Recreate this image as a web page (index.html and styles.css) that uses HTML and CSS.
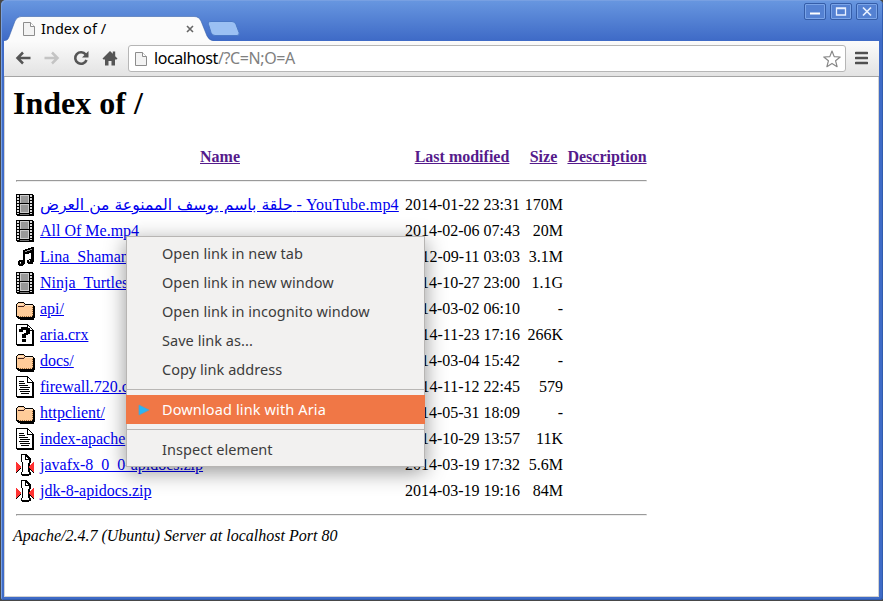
FILE: index.html
```
<!DOCTYPE html>
<html lang="en">
<head>
<meta charset="utf-8">
<title>Index of /</title>
<link rel="stylesheet" href="styles.css">
</head>
<body>
<svg width="0" height="0" class="defs" aria-hidden="true">
  <symbol id="doc" viewBox="0 0 12 14"><path d="M.5.5h7l4 4v9H.5z" fill="#f3f3f3" stroke="#8d8d8d"/><path d="M7.5.5v4h4" fill="#fff" stroke="#8d8d8d"/></symbol>
  <symbol id="film" viewBox="0 0 20 22" shape-rendering="crispEdges">
    <path d="M0 0h17v1h1v21H1v-1H0z"/>
    <path d="M1 1h2v2H1zM1 4h2v2H1zM1 7h2v2H1zM1 10h2v2H1zM1 13h2v2H1zM1 16h2v2H1zM1 19h2v1H1zM14 1h2v2h-2zM14 4h2v2h-2zM14 7h2v2h-2zM14 10h2v2h-2zM14 13h2v2h-2zM14 16h2v2h-2zM14 19h2v1h-2z" fill="#ddd"/>
    <path d="M4 1h9v8H4zM4 10h9v9H4z" fill="#ccc"/><path d="M5 2h7v7H5zM5 11h7v7H5z" fill="#999"/><path d="M4 20h9v1H4z" fill="#777"/>
  </symbol>
  <symbol id="sound" viewBox="0 0 20 22" shape-rendering="crispEdges">
    <path d="M7 4h2V3h3V2h3V1h3v15h-1v2h-5v-1h-1v-3h2v-1h2V7h-2v1H9v10H8v1H7v1H3v-1H2v-4h1v-1h4z"/><path d="M9 5h2V4h3V3h2v1h-2v1h-3v1H9zM4 16h1v2H4zM13 14h1v2h-1z" fill="#999"/><path d="M4 16h1v1H4zM13 14h1v1h-1z" fill="#fff"/>
  </symbol>
  <symbol id="folder" viewBox="0 0 20 22" shape-rendering="crispEdges">
    <path d="M2 4h6v1h1v1h8v1h1v1h1v12h-1v2H4v-1H2v-1H1v-1H0V6h1V5h1z"/>
    <path d="M2 5h6v1h1v1h8v11h-1v1H3v-1H1V6h1z" fill="#fc9"/>
    <path d="M2 8h6v1H2zM8 7h1v1H8z" fill="#422"/><path d="M2 6h5v1H2zM9 7h7v1H9z" fill="#ffe5c8"/>
    <path d="M4 18h1v1H4zM6 18h1v1H6zM8 18h1v1H8zM10 18h1v1h-1zM12 18h1v1h-1zM14 18h1v1h-1zM16 17h1v1h-1zM16 15h1v1h-1zM16 13h1v1h-1zM16 11h1v1h-1zM16 9h1v1h-1z" fill="#963"/>
  </symbol>
  <symbol id="sheet" viewBox="0 0 20 22" shape-rendering="crispEdges">
    <path d="M0 0h12v1h1v1h1v1h1v1h1v1h1v1h1v16H1v-1H0z"/><path d="M1 1h10v6h5v13H1z" fill="#fff"/><path d="M12 2h1v1h1v1h1v1h1v1h-4z" fill="#fff"/>
  </symbol>
  <symbol id="text" viewBox="0 0 20 22" shape-rendering="crispEdges">
    <use href="#sheet"/><path d="M3 5h5v1H3zM3 7h6v1H3zM3 9h9v1H3zM4 11h10v1H4zM3 13h10v1H3zM4 15h10v1H4zM5 17h8v1H5z"/>
  </symbol>
  <symbol id="unknown" viewBox="0 0 20 22" shape-rendering="crispEdges">
    <use href="#sheet"/><path d="M5 3h7v1h2v6h-2v1h-2v3H6v-4h2V9h2V6H7v2H3V5h2zM6 15h4v3H6z"/>
  </symbol>
  <symbol id="zip" viewBox="0 0 20 22" shape-rendering="crispEdges">
    <path d="M5 0h6v1h1v1h1v1h1v1h1v5h-1v9h1v3h-2v1H6v-1H5v-3h1V8H5z"/><path d="M6 1h3v5h4v3h-1v9h1v2H6v-2h1V8H6z" fill="#fff"/><path d="M10 2v3h2V4h-1V3h-1z" fill="#fff"/>
    <path d="M0 8h1v1h1v1h1v1h1v1h1v3H4v1H3v1H2v1H1v1H0zM18 8h-1v1h-1v1h-1v1h-1v1h-1v3h1v1h1v1h1v1h1v1h1z"/>
    <path d="M0 8h1v1h1v1h1v1h1v1h1v2H4v1H3v1H2v1H1v1H0zM17 8h1v10h-1v-1h-1v-1h-1v-1h-1v-1h-1v-2h1v-1h1v-1h1V9h1z" fill="#f33"/>
  </symbol>
</svg>

<div class="window">
  <header class="titlebar">
    <div class="tab">
      <svg class="tab-shape" width="210" height="25" viewBox="0 0 210 25"><path d="M0 25C4 24 4 23 5 21L11 5Q13 .5 17 .5H190Q195 .5 197 5L203 20Q205 24.5 210 25" fill="#fbfbfb" stroke="#355ea8" stroke-opacity=".55"/></svg>
      <svg class="tab-icon" width="12" height="14"><use href="#doc"/></svg>
      <span class="tab-title">Index of /</span>
      <svg class="tab-close" width="8" height="8" viewBox="0 0 8 8"><path d="M1 1l6 6M7 1L1 7" stroke="#666" stroke-width="1.6"/></svg>
    </div>
    <svg class="newtab" width="34" height="17" viewBox="0 0 34 17"><path d="M4 1.500h21q3 0 4 3l3 8q1 3-2 3H8q-3 0-4-3L1.500 4.500q-1-3 2.500-3z" fill="#9bc0f3" stroke="#4a78c6"/></svg>
    <div class="controls">
      <span class="control"><svg width="22" height="17" viewBox="0 0 22 17"><path d="M6 10.500h10" stroke="#fff" stroke-width="2"/></svg></span>
      <span class="control"><svg width="22" height="17" viewBox="0 0 22 17"><path d="M6.500 5h9v7h-9zM6 5.500h10" fill="none" stroke="#e8f0ff" stroke-width="1.300"/></svg></span>
      <span class="control"><svg width="22" height="17" viewBox="0 0 22 17"><path d="M7 4.500l8 8M15 4.500l-8 8" stroke="#e8f0ff" stroke-width="1.700"/></svg></span>
    </div>
  </header>

  <nav class="toolbar">
    <svg width="16" height="16" viewBox="0 0 16 16"><path d="M15.500 8H3M8 2.500L2.500 8 8 13.500" fill="none" stroke="#555" stroke-width="2.500"/></svg>
    <svg width="16" height="16" viewBox="0 0 16 16"><path d="M.5 8h12M8 2.500L13.500 8 8 13.500" fill="none" stroke="#c4c4c4" stroke-width="2.500"/></svg>
    <svg width="16" height="16" viewBox="0 0 16 16"><path d="M12.700 4.500A5.800 5.800 0 1 0 13.500 10" fill="none" stroke="#555" stroke-width="2.600"/><path d="M15.500 1v6.500H9z" fill="#555"/></svg>
    <svg width="16" height="16" viewBox="0 0 16 16"><path d="M8 1l2.800 2.800V1.500h2.400v4.700L15.500 8.500 14.500 9.500H13V15.500H9.500V11h-3v4.500H3V9.500H1.500L.5 8.500z" fill="#555"/></svg>
    <div class="address">
      <svg width="12" height="14"><use href="#doc"/></svg>
      <span class="url"><b>localhost</b>/?C=N;O=A</span>
      <svg class="star" width="18" height="18" viewBox="0 0 18 18"><path d="M9 1l2.200 5.600 6 .4-4.600 3.800 1.500 5.900L9 13.400l-5.100 3.300 1.500-5.900L.8 7l6-.4z" fill="#fff" stroke="#888" stroke-width="1.200" stroke-linejoin="round"/></svg>
    </div>
    <svg width="13" height="14" viewBox="0 0 13 14"><path d="M1 2h11M1 7h11M1 12h11" stroke="#505050" stroke-width="2.600" stroke-linecap="round"/></svg>
  </nav>

  <main class="page">
    <h1>Index of /</h1>
    <table>
      <colgroup><col class="c-icon"><col class="c-name"><col class="c-date"><col class="c-size"><col class="c-desc"></colgroup>
      <tr class="head"><th></th><th><a href="#">Name</a></th><th><a href="#">Last modified</a></th><th><a href="#">Size</a></th><th><a href="#">Description</a></th></tr>
      <tr><th colspan="5"><hr></th></tr>
      <tr><td><svg class="ico"><use href="#film"/></svg></td><td><a href="#"><span class="arabic" dir="rtl">حلقة باسم يوسف الممنوعة من العرض</span> <span class="latin">- YouTube.mp4</span></a></td><td>2014-01-22 23:31</td><td>170M</td><td></td></tr>
      <tr><td><svg class="ico"><use href="#film"/></svg></td><td><a href="#">All Of Me.mp4</a></td><td>2014-02-06 07:43</td><td>20M</td><td></td></tr>
      <tr><td><svg class="ico"><use href="#sound"/></svg></td><td><a href="#">Lina_Shamam</a></td><td>2012-09-11 03:03</td><td>3.1M</td><td></td></tr>
      <tr><td><svg class="ico"><use href="#film"/></svg></td><td><a href="#">Ninja_Turtles</a></td><td>2014-10-27 23:00</td><td>1.1G</td><td></td></tr>
      <tr><td><svg class="ico"><use href="#folder"/></svg></td><td><a href="#">api/</a></td><td>2014-03-02 06:10</td><td>-</td><td></td></tr>
      <tr><td><svg class="ico"><use href="#unknown"/></svg></td><td><a href="#">aria.crx</a></td><td>2014-11-23 17:16</td><td>266K</td><td></td></tr>
      <tr><td><svg class="ico"><use href="#folder"/></svg></td><td><a href="#">docs/</a></td><td>2014-03-04 15:42</td><td>-</td><td></td></tr>
      <tr><td><svg class="ico"><use href="#text"/></svg></td><td><a href="#">firewall.720.c</a></td><td>2014-11-12 22:45</td><td>579</td><td></td></tr>
      <tr><td><svg class="ico"><use href="#folder"/></svg></td><td><a href="#">httpclient/</a></td><td>2014-05-31 18:09</td><td>-</td><td></td></tr>
      <tr><td><svg class="ico"><use href="#text"/></svg></td><td><a href="#">index-apache</a></td><td>2014-10-29 13:57</td><td>11K</td><td></td></tr>
      <tr><td><svg class="ico"><use href="#zip"/></svg></td><td><a href="#">javafx-8_0_0-apidocs.zip</a></td><td>2014-03-19 17:32</td><td>5.6M</td><td></td></tr>
      <tr><td><svg class="ico"><use href="#zip"/></svg></td><td><a href="#">jdk-8-apidocs.zip</a></td><td>2014-03-19 19:16</td><td>84M</td><td></td></tr>
      <tr><th colspan="5"><hr></th></tr>
    </table>
    <address>Apache/2.4.7 (Ubuntu) Server at localhost Port 80</address>
  </main>
</div>

<div class="menu">
  <div class="item">Open link in new tab</div>
  <div class="item">Open link in new window</div>
  <div class="item">Open link in incognito window</div>
  <div class="item">Save link as...</div>
  <div class="item">Copy link address</div>
  <div class="sep"></div>
  <div class="item active"><svg class="arrow" width="12" height="12" viewBox="0 0 12 12"><path d="M1 1l10 5-10 5z" fill="#29b6f6" stroke="#5f9dc0" stroke-width=".8"/></svg>Download link with Aria</div>
  <div class="sep"></div>
  <div class="item">Inspect element</div>
</div>
</body>
</html>
```
FILE: styles.css
```
* { box-sizing: border-box; }
body { margin: 0; width: 883px; height: 601px; overflow: hidden; background: #484848; }
.defs { position: absolute; }
.window {
  width: 882px; height: 600px; margin-left: 1px; padding: 1px 4px 3px 3px;
  display: flex; flex-direction: column;
  background: linear-gradient(#6897e0, #3f6bc7 40px);
  border-radius: 5px 5px 3px 3px;
  box-shadow: inset 1px 1px 0 #78a0e2, inset -1px -1px 0 #315cae;
}
.titlebar { height: 40px; flex: none; display: flex; align-items: flex-end; font: 15px "Noto Sans", sans-serif; }
.tab { position: relative; width: 203px; height: 25px; display: flex; align-items: center; padding: 0 13px 0 19px; }
.tab-shape { position: absolute; left: 0; top: 0; }
.tab-icon, .tab-title, .tab-close { position: relative; }
.tab-title { margin-left: 6px; font-size: 14.5px; line-height: 20px; margin-top: -2px; color: #000; white-space: nowrap; }
.tab-close { margin-left: auto; }
.newtab { margin: 0 0 4px 0; }
.controls { margin-left: auto; align-self: flex-start; display: flex; gap: 4px; padding: 2px 1px 0 0; }
.control { width: 22px; height: 17px; border: 1px solid #355da8; border-radius: 2px; box-shadow: inset 0 0 0 1px #7aa4e8; background: #5481d2; }
.control svg { display: block; margin: -1px; }
.toolbar {
  height: 36px; flex: none; display: flex; align-items: center; gap: 13px; padding: 0 11px 0 11px;
  background: linear-gradient(#fbfbfb, #e3e3e3); border-bottom: 1px solid #a5a5a5;
}
.toolbar > svg { flex: none; margin-top: -1px; }
.address {
  flex: 1; height: 27px; margin: 0 -4px 0 -3px; padding: 0 4px 0 6px; display: flex; align-items: center;
  background: #fff; border: 1px solid #b6b6b6; border-radius: 3px; font: 16px "Noto Sans", sans-serif;
}
.url { flex: 1; margin: -2px 0 0 7px; color: #808080; letter-spacing: -.4px; white-space: nowrap; }
.url b { font-weight: 400; color: #000; }
.page {
  flex: 1; padding: 8px 9px 0 8px; background: #fff; border: solid #d2d2d2; border-width: 0 1px 1px;
  font: 16px "Liberation Serif", serif; color: #000;
}
h1 { margin: 0 0 21px; font-size: 32px; line-height: 37px; }
table { table-layout: fixed; width: 637px; border-spacing: 2px; }
.c-icon { width: 22px; } .c-name { width: 362px; } .c-date { width: 118px; } .c-size { width: 41px; } .c-desc { width: 82px; }
td, th { padding: 1px; height: 24px; line-height: 18px; white-space: nowrap; }
th[colspan] { height: 20px; }
td:nth-child(n+3) { text-align: right; }
a { color: #00e; }
th a { color: #551a8b; }
.arabic { font-family: "DejaVu Sans", sans-serif; font-size: 15.65px; line-height: 16px; unicode-bidi: isolate; }
.latin { letter-spacing: .2px; }
.ico { display: block; width: 20px; height: 22px; }
hr { margin: 8px 0; border: 1px solid; border-color: #9a9a9a #eee #eee #9a9a9a; }
address { line-height: 18px; }
.menu {
  position: absolute; left: 126px; top: 236px; width: 299px; height: 231px; padding: 2px 0;
  background: #f2f1f0; border: 1px solid #b7b5b3; box-shadow: 0 5px 20px rgba(0,0,0,.42);
  font: 14.5px "Noto Sans", sans-serif; letter-spacing: .05px; color: #3c3c3c;
}
.item { position: relative; height: 29px; line-height: 28px; padding-left: 35px; white-space: nowrap; }
.item.active { margin: 0 -1px; padding-left: 36px; background: #f07746; color: #fff; letter-spacing: .13px; }
.arrow { position: absolute; left: 12px; top: 9px; }
.sep { height: 6px; margin-top: 5px; border-top: 1px solid #b9b7b5; }
```
